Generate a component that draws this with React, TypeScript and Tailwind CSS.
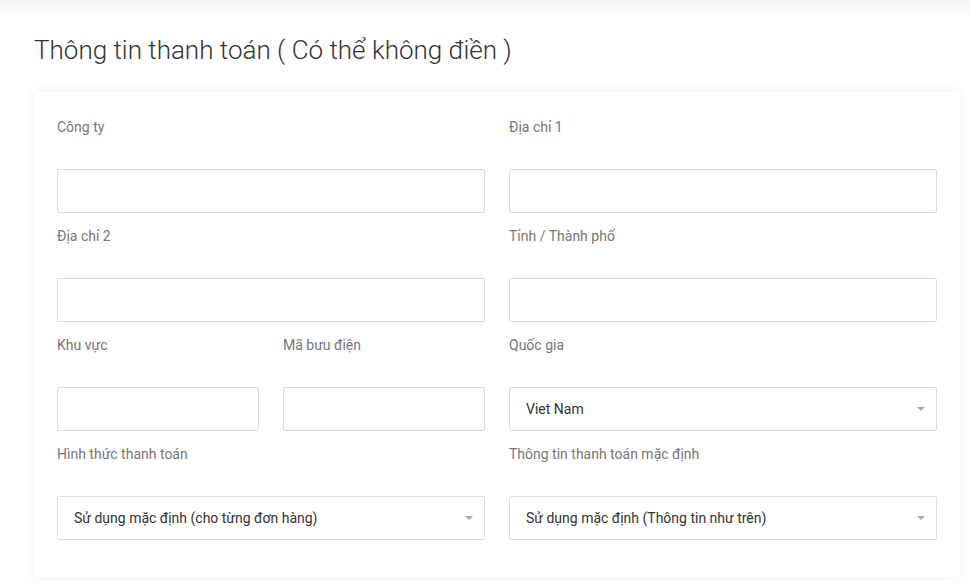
const Label = ({ children }: { children: React.ReactNode }) => (
  <label className="block h-5 leading-5 text-[14px] text-[#777] mb-8">{children}</label>
);

const TextField = ({ label }: { label: string }) => (
  <div className="mb-[13px]">
    <Label>{label}</Label>
    <input
      type="text"
      className="block w-full h-[44px] border border-[#ddd] rounded-[2px] bg-white px-4 text-[14px] text-[#333] outline-none"
    />
  </div>
);

const SelectField = ({ label, value }: { label: string; value: string }) => (
  <div className="mb-[13px]">
    <Label>{label}</Label>
    <div className="relative">
      <select
        defaultValue={value}
        className="block w-full h-[44px] appearance-none border border-[#ddd] rounded-[2px] bg-white pl-4 pr-8 text-[14px] text-[#333] outline-none"
      >
        <option>{value}</option>
      </select>
      <span className="pointer-events-none absolute right-[12px] top-1/2 -translate-y-1/2 w-0 h-0 border-l-[4px] border-r-[4px] border-t-[4px] border-l-transparent border-r-transparent border-t-[#aaa]" />
    </div>
  </div>
);

export default function App() {
  return (
    <div className="min-h-screen bg-white font-['Roboto',sans-serif]">
      {/* shadow left by the block above */}
      <div className="h-[16px] bg-gradient-to-b from-[#f3f3f3] to-white" />

      <div className="pl-[34px] pr-[10px] pt-[16px]">
        <h2 className="h-9 leading-9 text-[26px] font-light text-[#333] mb-6">
          Thông tin thanh toán ( Có thể không điền )
        </h2>

        <div className="bg-white rounded-[3px] shadow-[0_0_12px_rgba(0,0,0,0.07)] px-[23px] pt-[25px] pb-[24px]">
          <div className="grid grid-cols-2 gap-x-6">
            <TextField label="Công ty" />
            <TextField label="Địa chỉ 1" />
            <TextField label="Địa chỉ 2" />
            <TextField label="Tỉnh / Thành phố" />
            <div className="grid grid-cols-2 gap-x-6">
              <TextField label="Khu vực" />
              <TextField label="Mã bưu điện" />
            </div>
            <SelectField label="Quốc gia" value="Viet Nam" />
            <SelectField label="Hình thức thanh toán" value="Sử dụng mặc định (cho từng đơn hàng)" />
            <SelectField label="Thông tin thanh toán mặc định" value="Sử dụng mặc định (Thông tin như trên)" />
          </div>
        </div>
      </div>
    </div>
  );
}
